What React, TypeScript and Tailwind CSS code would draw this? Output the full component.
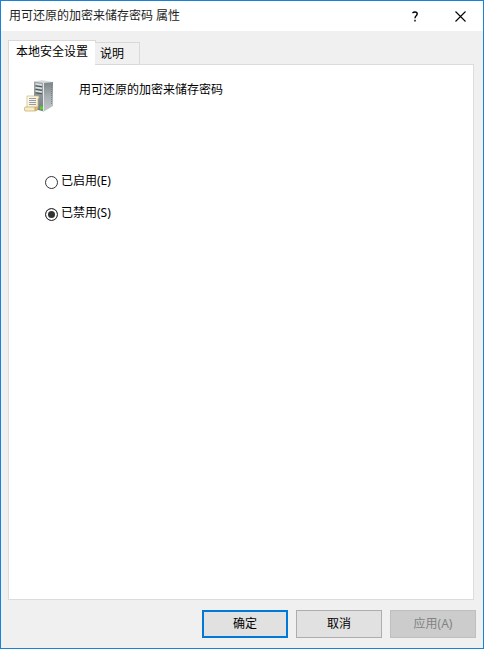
import { useState } from "react";

function ServerIcon() {
  return (
    <svg width="32" height="32" viewBox="0 0 32 32" aria-hidden="true">
      <defs>
        <linearGradient id="front" x1="0" y1="0" x2="0" y2="1">
          <stop offset="0" stopColor="#a3a9ab" />
          <stop offset="1" stopColor="#747c80" />
        </linearGradient>
        <linearGradient id="side" x1="0" y1="0" x2="0" y2="1">
          <stop offset="0" stopColor="#7d8589" />
          <stop offset="0.5" stopColor="#a9b0b3" />
          <stop offset="1" stopColor="#c3c8ca" />
        </linearGradient>
        <linearGradient id="paper" x1="0" y1="0" x2="1" y2="1">
          <stop offset="0" stopColor="#fffdf0" />
          <stop offset="1" stopColor="#f6ebc4" />
        </linearGradient>
      </defs>
      <path d="M11 1.5 L19 0.3 L30 2 L21 3.5 Z" fill="#d5dadb" />
      <path d="M11 1.5 L21 3 V31.5 L11 29 Z" fill="url(#front)" />
      <path d="M21 3 L30 2 V26 L21 31.5 Z" fill="url(#side)" />
      <path d="M20.5 3 V31.5" stroke="#e4e8e9" strokeWidth="1" />
      <path d="M12.5 4 L19 5 M12.5 7.5 L19 8.5 M12.5 11 L19 12" stroke="#dfe4e5" strokeWidth="1.3" />
      <path d="M12.5 5.8 L19 6.8 M12.5 9.3 L19 10.3 M12.5 12.8 L19 13.8" stroke="#465156" strokeWidth="1" />
      <path d="M28.5 5 V25" stroke="#77858a" strokeWidth="1" strokeDasharray="1 1" />
      <rect x="17" y="26.5" width="3" height="3" fill="#59d51c" />
      <path d="M4 16 H15 Q16.5 16 16 18 L15 18.5 V28 H4 Z" fill="url(#paper)" stroke="#c9b67e" strokeWidth="0.7" />
      <path d="M2 27 H12 V31 H2 Q0.7 29 2 27 Z" fill="#f8edc6" stroke="#c3a766" strokeWidth="0.7" />
      <path d="M12 27 H15 Q15 31 12.5 31 Z" fill="#dcc382" stroke="#bd9d58" strokeWidth="0.6" />
      <path d="M6 18.5 H13 M6 20.5 H13 M6 22.5 H13 M6 24.5 H13" stroke="#8c8fae" strokeWidth="0.9" />
    </svg>
  );
}

const radioClass =
  "size-[13px] shrink-0 appearance-none rounded-full border border-[#333] bg-white checked:bg-[#333] checked:shadow-[inset_0_0_0_2px_#fff]";

export default function App() {
  const [value, setValue] = useState("disabled");

  return (
    <div className="flex min-h-screen flex-col border border-[#1883d7] bg-[#f0f0f0] font-['Noto_Sans','Noto_Sans_CJK_SC',sans-serif] text-xs text-black">
      <header className="flex h-[30px] items-center bg-white pl-2 pr-[17px]">
        <h1 className="flex-1 text-[#222]">用可还原的加密来储存密码 属性</h1>
        <button type="button" aria-label="帮助" className="flex h-full w-8 items-center justify-center">
          <svg width="8" height="11" viewBox="0 0 8 11" fill="none" stroke="#000" strokeWidth="1.4" aria-hidden="true">
            <path d="M1.5 2 Q2.5 1 4 1 Q6.2 1 6.2 2.8 Q6.2 4 5 5 Q4 5.8 4 7.2" />
            <path d="M4 8.8 V10.4" />
          </svg>
        </button>
        <button type="button" aria-label="关闭" className="ml-6 flex h-full w-[11px] items-center justify-center">
          <svg width="11" height="11" viewBox="0 0 11 11" stroke="#000" strokeWidth="1.1" className="shrink-0" aria-hidden="true">
            <path d="M0.5 0.5 L10.5 10.5 M10.5 0.5 L0.5 10.5" />
          </svg>
        </button>
      </header>

      <main className="flex flex-1 flex-col pl-[7px] pr-[9px] pt-[9px]">
        <div role="tablist" className="z-10 -mb-px flex items-end">
          <button type="button" role="tab" aria-selected="true" className="h-[25px] border border-b-0 border-[#d9d9d9] bg-white px-[7px] pb-0.5">
            本地安全设置
          </button>
          <button type="button" role="tab" aria-selected="false" className="-ml-px h-[23px] border border-l-0 border-[#d9d9d9] bg-[#f0f0f0] pl-[5px] pr-[15px]">
            说明
          </button>
        </div>

        <section role="tabpanel" className="flex-1 border border-[#dcdcdc] bg-white px-[14px] pt-[15px]">
          <div className="flex gap-6">
            <ServerIcon />
            <p className="pt-0.5">用可还原的加密来储存密码</p>
          </div>
          <fieldset className="mt-[61px] flex flex-col gap-4 pl-[22px]">
            <label className="flex items-end gap-[3px]">
              <input type="radio" name="policy" className={radioClass} checked={value === "enabled"} onChange={() => setValue("enabled")} />
              已启用(E)
            </label>
            <label className="flex items-end gap-[3px]">
              <input type="radio" name="policy" className={radioClass} checked={value === "disabled"} onChange={() => setValue("disabled")} />
              已禁用(S)
            </label>
          </fieldset>
        </section>
      </main>

      <footer className="flex justify-end gap-2 py-[10px] pr-[7px]">
        <button type="button" className="h-7 w-[86px] border-2 border-[#0078d7] bg-[#e1e1e1]">确定</button>
        <button type="button" className="h-7 w-[86px] border border-[#adadad] bg-[#e1e1e1]">取消</button>
        <button type="button" disabled className="h-7 w-[86px] border border-[#bfbfbf] bg-[#ccc] text-[#838383]">应用(A)</button>
      </footer>
    </div>
  );
}
